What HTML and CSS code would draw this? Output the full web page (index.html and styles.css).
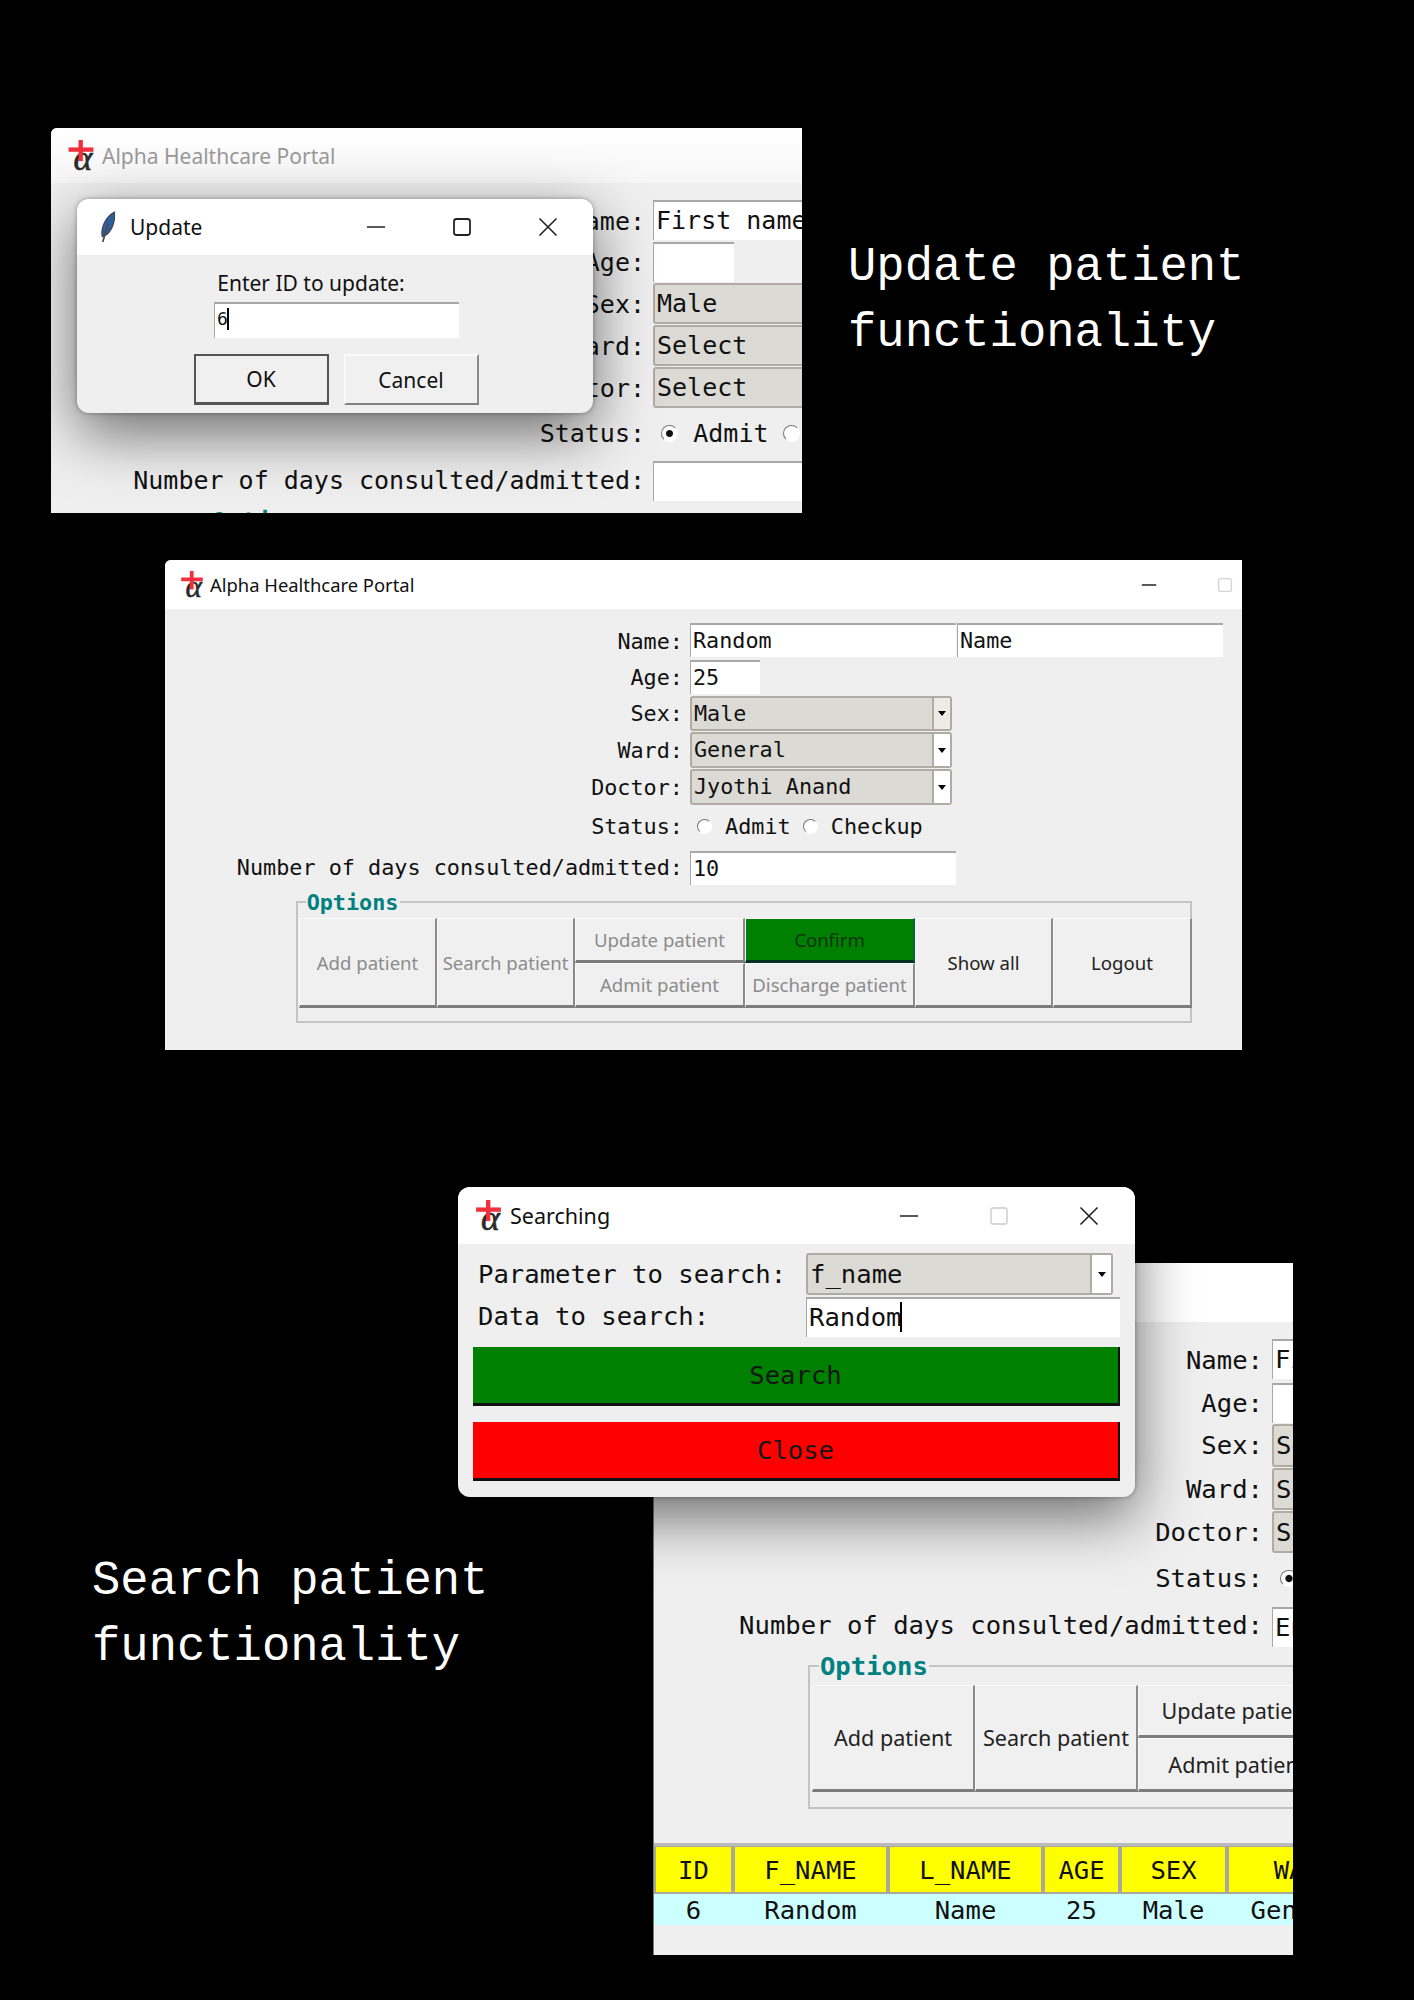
FILE: index.html
```html
<!DOCTYPE html>
<html lang="en">
<head>
    <meta charset="UTF-8">
    <title>Alpha Healthcare Portal</title>
    <link rel="stylesheet" href="styles.css">
</head>
<body>
<svg class="defs" width="0" height="0">
    <symbol id="feather" viewBox="0 0 16 30">
        <path d="M3.5 24 C2 16 6 6 15 1 C16 11 12 20 5.5 23.5 Z" fill="#2f5c9c" stroke="#3a4048" stroke-width="1"/>
        <path d="M9 12 L4 29" stroke="#4a4a4a" stroke-width="1.6" fill="none"/>
    </symbol>
    <symbol id="min" viewBox="0 0 20 20"><path d="M1 10 H19" stroke="#222" stroke-width="1.6"/></symbol>
    <symbol id="max" viewBox="0 0 20 20"><rect x="2" y="2" width="16" height="16" rx="2.5" fill="none" stroke="currentColor" stroke-width="1.8"/></symbol>
    <symbol id="close" viewBox="0 0 20 20"><path d="M1.5 1.5 L18.5 18.5 M18.5 1.5 L1.5 18.5" stroke="#222" stroke-width="1.6"/></symbol>
</svg>

<div class="desk">

    <!-- update patient, behind the dialog -->
    <div class="win win-a">
        <div class="titlebar">
            <svg class="logo" viewBox="0 0 20 25"><text x="4" y="24" class="logo-alpha">α</text><rect x="0" y="6" width="20" height="3.5" fill="#f0303c"/><rect x="8" y="0" width="3.5" height="17" fill="#f0303c"/></svg>
            <span class="title faded">Alpha Healthcare Portal</span>
        </div>
        <div class="form">
            <div class="lbl">Name:</div>
            <div class="cell"><div class="entry">First name</div></div>
            <div class="lbl">Age:</div>
            <div class="cell"><div class="entry short"></div></div>
            <div class="lbl">Sex:</div>
            <div class="cell"><div class="combo"><span class="combo-val">Male</span><span class="combo-btn"><i></i></span></div></div>
            <div class="lbl">Ward:</div>
            <div class="cell"><div class="combo"><span class="combo-val">Select</span><span class="combo-btn"><i></i></span></div></div>
            <div class="lbl">Doctor:</div>
            <div class="cell"><div class="combo"><span class="combo-val">Select</span><span class="combo-btn"><i></i></span></div></div>
            <div class="lbl lbl-status">Status:</div>
            <div class="cell radios"><span class="radio checked"></span><span>Admit</span><span class="radio"></span></div>
            <div class="lbl">Number of days consulted/admitted:</div>
            <div class="cell"><div class="entry"></div></div>
        </div>
        <div class="frame">
            <span class="legend">Options</span>
        </div>
    </div>

    <div class="dialog dlg-update">
        <div class="titlebar">
            <svg class="feather"><use href="#feather"/></svg>
            <span class="title">Update</span>
            <span class="controls">
                <svg class="ctl"><use href="#min"/></svg>
                <svg class="ctl"><use href="#max"/></svg>
                <svg class="ctl"><use href="#close"/></svg>
            </span>
        </div>
        <div class="ask">
            <div class="ask-label">Enter ID to update:</div>
            <div class="ask-entry">6<span class="caret"></span></div>
            <div class="ask-btns">
                <div class="ask-btn default">OK</div>
                <div class="ask-btn">Cancel</div>
            </div>
        </div>
    </div>

    <div class="caption caption-update">Update patient<br>functionality</div>

    <!-- confirm state -->
    <div class="win win-b">
        <div class="titlebar">
            <svg class="logo" viewBox="0 0 20 25"><text x="4" y="24" class="logo-alpha">α</text><rect x="0" y="6" width="20" height="3.5" fill="#f0303c"/><rect x="8" y="0" width="3.5" height="17" fill="#f0303c"/></svg>
            <span class="title">Alpha Healthcare Portal</span>
            <span class="controls">
                <svg class="ctl"><use href="#min"/></svg>
                <svg class="ctl off"><use href="#max"/></svg>
            </span>
        </div>
        <div class="form">
            <div class="lbl">Name:</div>
            <div class="cell"><div class="entry">Random</div><div class="entry">Name</div></div>
            <div class="lbl">Age:</div>
            <div class="cell"><div class="entry short">25</div></div>
            <div class="lbl">Sex:</div>
            <div class="cell"><div class="combo"><span class="combo-val">Male</span><span class="combo-btn hover"><i></i></span></div></div>
            <div class="lbl">Ward:</div>
            <div class="cell"><div class="combo"><span class="combo-val">General</span><span class="combo-btn"><i></i></span></div></div>
            <div class="lbl">Doctor:</div>
            <div class="cell"><div class="combo"><span class="combo-val">Jyothi Anand</span><span class="combo-btn"><i></i></span></div></div>
            <div class="lbl lbl-status">Status:</div>
            <div class="cell radios"><span class="radio"></span><span>Admit</span><span class="radio"></span><span>Checkup</span></div>
            <div class="lbl">Number of days consulted/admitted:</div>
            <div class="cell"><div class="entry">10</div></div>
        </div>
        <div class="frame">
            <span class="legend">Options</span>
            <div class="opts">
                <div class="opt tall off">Add patient</div>
                <div class="opt tall off">Search patient</div>
                <div class="opt off">Update patient</div>
                <div class="opt confirm">Confirm</div>
                <div class="opt tall">Show all</div>
                <div class="opt tall">Logout</div>
                <div class="opt off">Admit patient</div>
                <div class="opt off">Discharge patient</div>
            </div>
        </div>
    </div>

    <!-- search window -->
    <div class="win win-c">
        <div class="titlebar"></div>
        <div class="form">
            <div class="lbl">Name:</div>
            <div class="cell"><div class="entry">First name</div></div>
            <div class="lbl">Age:</div>
            <div class="cell"><div class="entry short"></div></div>
            <div class="lbl">Sex:</div>
            <div class="cell"><div class="combo"><span class="combo-val">Select</span><span class="combo-btn"><i></i></span></div></div>
            <div class="lbl">Ward:</div>
            <div class="cell"><div class="combo"><span class="combo-val">Select</span><span class="combo-btn"><i></i></span></div></div>
            <div class="lbl">Doctor:</div>
            <div class="cell"><div class="combo"><span class="combo-val">Select</span><span class="combo-btn"><i></i></span></div></div>
            <div class="lbl lbl-status">Status:</div>
            <div class="cell radios"><span class="radio checked"></span></div>
            <div class="lbl">Number of days consulted/admitted:</div>
            <div class="cell"><div class="entry">Enter</div></div>
        </div>
        <div class="frame">
            <span class="legend">Options</span>
            <div class="opts">
                <div class="opt tall">Add patient</div>
                <div class="opt tall">Search patient</div>
                <div class="opt">Update patient</div>
                <div class="opt spacer"></div>
                <div class="opt tall spacer"></div>
                <div class="opt tall spacer"></div>
                <div class="opt">Admit patient</div>
            </div>
        </div>
        <table class="grid">
            <thead>
                <tr><th class="c-id">ID</th><th class="c-name">F_NAME</th><th class="c-name">L_NAME</th><th class="c-age">AGE</th><th class="c-sex">SEX</th><th class="c-name">WARD</th></tr>
            </thead>
            <tbody>
                <tr><td>6</td><td>Random</td><td>Name</td><td>25</td><td>Male</td><td>General</td></tr>
            </tbody>
        </table>
    </div>

    <div class="dialog dlg-search">
        <div class="titlebar">
            <svg class="logo" viewBox="0 0 20 25"><text x="4" y="24" class="logo-alpha">α</text><rect x="0" y="6" width="20" height="3.5" fill="#f0303c"/><rect x="8" y="0" width="3.5" height="17" fill="#f0303c"/></svg>
            <span class="title">Searching</span>
            <span class="controls">
                <svg class="ctl"><use href="#min"/></svg>
                <svg class="ctl off"><use href="#max"/></svg>
                <svg class="ctl"><use href="#close"/></svg>
            </span>
        </div>
        <div class="search">
            <div class="search-lbl">Parameter to search:</div>
            <div class="combo"><span class="combo-val">f_name</span><span class="combo-btn"><i></i></span></div>
            <div class="search-lbl">Data to search:</div>
            <div class="entry">Random<span class="caret"></span></div>
            <div class="bigbtn go">Search</div>
            <div class="bigbtn stop">Close</div>
        </div>
    </div>

    <div class="caption caption-search">Search patient<br>functionality</div>
</div>
</body>
</html>
```

FILE: styles.css
```css
* { box-sizing: border-box; }

body {
    margin: 0;
    background-color: #000;
    font-family: "DejaVu Sans Mono", monospace;
    color: #111;
}

.defs { position: absolute; }

.logo-alpha {
    font-family: "Liberation Serif", serif;
    font-style: italic;
    font-size: 29px;
    fill: #2a2a2a;
    stroke: #2a2a2a;
    stroke-width: .5px;
}

.desk {
    position: relative;
    width: 1414px;
    height: 2000px;
    background-color: #000;
    overflow: hidden;
}

.caption {
    position: absolute;
    color: #fff;
    font-family: "Liberation Mono", monospace;
    font-size: 47.2px;
    line-height: 66px;
}

.caption-update { left: 848px; top: 235px; }
.caption-search { left: 92px; top: 1549px; }

/* windows */
.win {
    position: absolute;
    background-color: #efefef;
    overflow: hidden;
    border-radius: 6px 0 0 0;
}

.win-a { left: 51px; top: 128px; width: 751px; height: 385px; font-size: 25px; }
.win-b { left: 165px; top: 560px; width: 1077px; height: 490px; font-size: 21.8px; }
.win-c { left: 653px; top: 1263px; width: 640px; height: 692px; font-size: 25.6px; border-radius: 0; border-left: 1px solid #777; }

.dialog {
    position: absolute;
    background-color: #efefef;
    border-radius: 12px;
    overflow: hidden;
    box-shadow: 0 20px 60px rgba(0, 0, 0, .55), 0 0 5px rgba(0, 0, 0, .35);
}

.dlg-update { left: 77px; top: 199px; width: 516px; height: 214px; }
.dlg-search { left: 458px; top: 1187px; width: 677px; height: 310px; }

.titlebar {
    display: flex;
    align-items: center;
    background-color: #fff;
    font-family: "Noto Sans", sans-serif;
}

.win-a .titlebar { height: 55px; padding-left: 17px; background: linear-gradient(#fff, #f6f6f6); }
.win-b .titlebar { height: 49px; padding-left: 16px; }
.win-c .titlebar { height: 59px; }
.dlg-update .titlebar { height: 56px; padding-left: 21px; }
.dlg-search .titlebar { height: 57px; padding-left: 18px; }

.logo { width: 22px; height: 27px; flex: none; }
.win-a .logo { width: 26px; height: 31px; }
.dlg-search .logo { width: 25px; height: 31px; }
.feather { width: 18px; height: 32px; flex: none; }

.title { margin-left: 7px; white-space: nowrap; }
.win-a .title { font-size: 21px; margin-left: 8px; }
.win-b .title { font-size: 18.4px; margin-left: 7px; }
.dlg-update .title { font-size: 21px; margin-left: 14px; }
.dlg-search .title { font-size: 21.5px; margin-left: 9px; }
.faded { color: #999; }

.controls { margin-left: auto; display: flex; align-items: center; }
.ctl { width: 20px; height: 20px; color: #222; }
.ctl.off { color: #d6d6d6; }

.win-b .controls { gap: 60px; padding-right: 9px; }
.win-b .ctl { width: 16px; height: 16px; }
.dlg-update .controls { gap: 66px; padding-right: 35px; }
.dlg-search .controls { gap: 70px; padding-right: 36px; }

/* tk form */
.form {
    display: grid;
    align-items: center;
}

.win-a .form {
    grid-template-columns: 594px 1fr;
    column-gap: 8px;
    grid-template-rows: 42px 41px 42px 42px 42px 52px 38px;
    margin-top: 17px;
}

.win-b .form {
    grid-template-columns: 518px 1fr;
    column-gap: 7px;
    grid-template-rows: 37px 36px 36px 37px 37px 45px 34px;
    margin-top: 14px;
}

.win-c .form {
    grid-template-columns: 609px 1fr;
    column-gap: 9px;
    grid-template-rows: 44px 41px 44px 43px 43px 53px 38px;
    margin-top: 17px;
}

.lbl { text-align: right; white-space: nowrap; line-height: 1; }
.lbl-status { padding-bottom: 4px; }

.cell { display: flex; align-self: start; height: 100%; }

.entry {
    width: 12.2em;
    height: 1.58em;
    flex: none;
    background-color: #fff;
    border-top: 2px solid #a8a8a8;
    border-left: 1px solid #a8a8a8;
    padding-left: 2px;
    line-height: 1.48em;
    white-space: nowrap;
    overflow: hidden;
}

.entry + .entry { margin-left: 1px; }
.entry.short { width: 3.22em; }

.combo {
    display: flex;
    width: 12.02em;
    height: calc(100% - 1px);
    background-color: #dcdad5;
    border: 2px solid #b0aca4;
    border-radius: 3px;
    align-items: center;
    line-height: 1.3;
}

.combo-val { flex: 1; padding: 1px 0 0 2px; white-space: nowrap; overflow: hidden; }

.combo-btn {
    width: 18px;
    height: 100%;
    background-color: #fff;
    border-left: 2px solid #b0aca4;
    display: flex;
    align-items: center;
    justify-content: center;
    flex: none;
}

.combo-btn.hover { background-color: #eeebe7; }

.combo-btn i {
    width: 0;
    height: 0;
    border-left: 4.5px solid transparent;
    border-right: 4.5px solid transparent;
    border-top: 5px solid #000;
}

.radios { align-items: center; padding-bottom: 4px; white-space: nowrap; }

.radio {
    width: .68em;
    height: .68em;
    flex: none;
    border-radius: 50%;
    background-color: #fff;
    border: 1.5px solid #fff;
    border-top-color: #777;
    border-left-color: #777;
    margin-left: .33em;
    margin-right: .6em;
}

.radio + span + .radio { margin-left: .56em; }
.radio.checked { background: radial-gradient(circle, #111 0 28%, #fff 38%); }

/* options box */
.frame {
    position: relative;
    border: 2px solid #c4c4c4;
}

.win-a .frame { width: 1029px; margin: 20px 0 0 149px; height: 140px; }
.win-b .frame { width: 896px; margin: 16px 0 0 131px; padding: 15px 0 13px 1px; }
.win-c .frame { width: 1057px; margin: 20px 0 0 154px; padding: 18px 0 15px 2px; }

.legend {
    position: absolute;
    left: .35em;
    top: -.5em;
    padding: 0 1px;
    background-color: #efefef;
    color: #008080;
    font-weight: bold;
    line-height: 1;
}

.opts {
    display: grid;
    font-family: "Noto Sans", sans-serif;
}

.win-b .opts {
    grid-template-columns: 138px 138px 170px 170px 138px 139px;
    grid-template-rows: 45px 45px;
    font-size: 18.6px;
}

.win-c .opts {
    grid-template-columns: 163px 163px 200px 200px 163px 164px;
    grid-template-rows: 53px 54px;
    font-size: 21.6px;
}

.opt {
    display: flex;
    align-items: center;
    justify-content: center;
    background-color: #f0f0f0;
    border-top: 1px solid #fafafa;
    border-left: 1px solid #fafafa;
    border-right: 2px solid #8a8a8a;
    border-bottom: 3px solid #7c7c7c;
    color: #222;
    white-space: nowrap;
}

.opt.tall { grid-row: span 2; }
.opt.off { color: #8c8c8c; }
.opt.confirm {
    background-color: #008000;
    color: #123312;
    border-right-color: #063;
    border-bottom-color: #032;
}

/* results table */
.grid {
    border-collapse: separate;
    border-spacing: 0;
    table-layout: fixed;
    width: 700px;
    margin-top: 34px;
    border-top: 3px solid #bbb;
    background-color: #fff;
}

.grid th, .grid td { font-weight: normal; text-align: center; padding: 0; }

.grid th {
    height: 48px;
    background-color: #ff0;
    border: 2px solid #aaa89c;
    border-width: 1px 2px 2px 2px;
}

.grid td {
    height: 31px;
    background-color: #ccffff;
}

.c-id { width: 79px; }
.c-name { width: 155px; }
.c-age { width: 77px; }
.c-sex { width: 107px; }

/* update dialog body */
.ask { display: flex; flex-direction: column; align-items: center; font-family: "Noto Sans", sans-serif; padding-top: 14px; }
.ask-label { font-size: 21px; line-height: 28px; margin-right: 48px; }

.ask-entry {
    width: 245px;
    height: 36px;
    margin-top: 5px;
    margin-left: 3px;
    background-color: #fff;
    border-top: 2px solid #a8a8a8;
    border-left: 1px solid #a8a8a8;
    padding-left: 2px;
    font-family: "DejaVu Sans Mono", monospace;
    font-size: 18px;
    line-height: 30px;
}

.ask-btns { display: flex; gap: 15px; margin-top: 16px; margin-left: 2px; }

.ask-btn {
    width: 135px;
    height: 51px;
    display: flex;
    align-items: center;
    justify-content: center;
    background-color: #f0f0f0;
    border: 2px solid #fafafa;
    border-right-color: #8a8a8a;
    border-bottom-color: #808080;
    font-size: 21px;
}

.ask-btn.default { border: 2px solid #555; border-bottom-width: 3px; }

.caret {
    display: inline-block;
    width: 2px;
    height: 1.2em;
    margin-left: -1px;
    background-color: #000;
    vertical-align: -.25em;
}

/* search dialog body */
.search {
    display: grid;
    grid-template-columns: 333px 1fr;
    grid-template-rows: 44px 40px;
    padding: 9px 15px 0;
    font-size: 25.6px;
    align-items: center;
}

.search-lbl { padding-left: 5px; line-height: 1; }
.search .combo { width: 307px; height: 42px; align-self: start; }
.search .combo-btn { width: 21px; }
.search .entry { width: 100%; height: 40px; line-height: 37px; }

.bigbtn {
    grid-column: 1 / 3;
    height: 59px;
    display: flex;
    align-items: center;
    justify-content: center;
    line-height: 1;
    padding-top: 2px;
    border-right: 2px solid #111;
    border-bottom: 3px solid #111;
    color: #161616;
}

.bigbtn.go { background-color: #008000; margin-top: 10px; }
.bigbtn.stop { background-color: #f00; margin-top: 16px; }
```
